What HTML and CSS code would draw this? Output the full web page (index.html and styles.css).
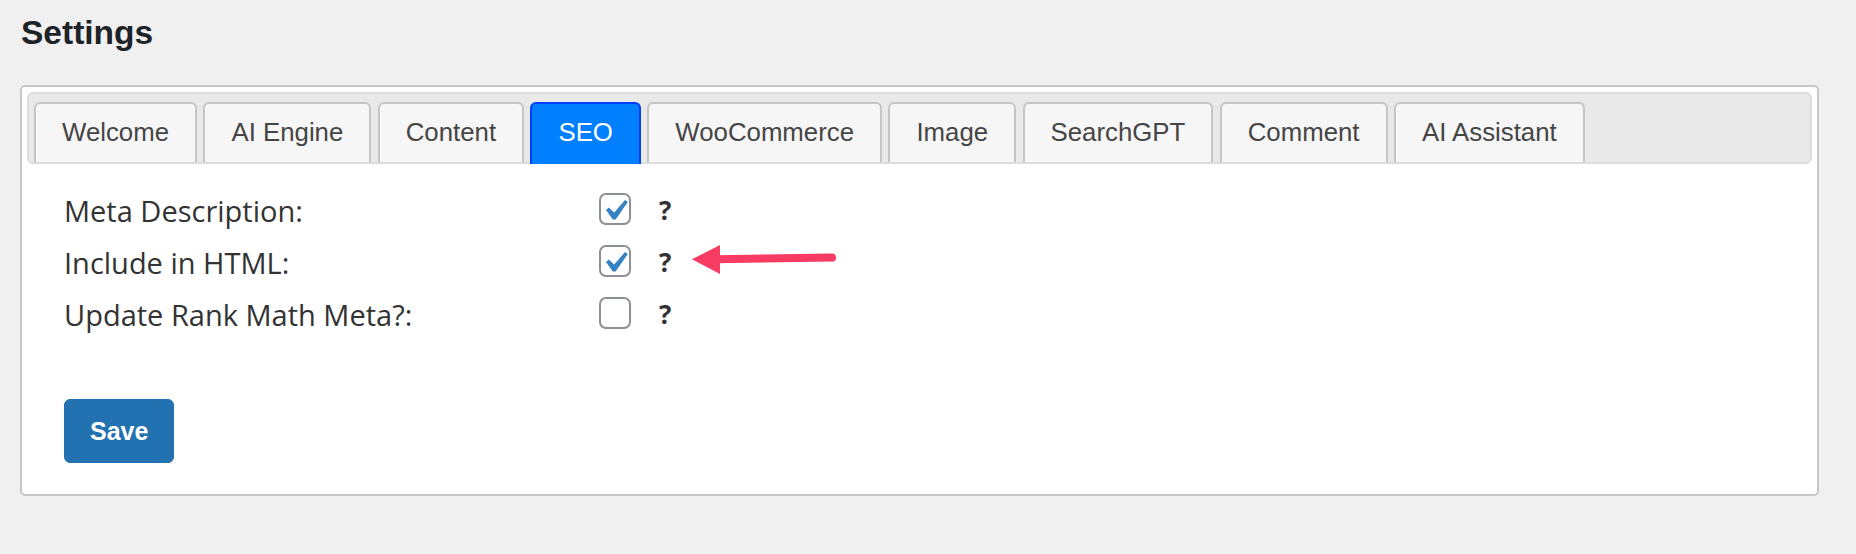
FILE: index.html
```html
<!DOCTYPE html>
<html lang="en">
<head>
<meta charset="utf-8">
<title>Settings</title>
<link rel="stylesheet" href="styles.css">
</head>
<body>
<div class="wrap">
  <h1 class="title">Settings</h1>
  <div class="box">
    <ul class="tabs">
      <li class="tab">Welcome</li>
      <li class="tab">AI Engine</li>
      <li class="tab">Content</li>
      <li class="tab active">SEO</li>
      <li class="tab">WooCommerce</li>
      <li class="tab">Image</li>
      <li class="tab">SearchGPT</li>
      <li class="tab">Comment</li>
      <li class="tab">AI Assistant</li>
    </ul>
    <div class="panel">
      <div class="row">
        <span class="label">Meta Description:</span>
        <span class="check">
          <svg class="tick" width="28" height="28" viewBox="3.4 2.51 13.33 13.33"><path d="M14.83 4.89l1.34.94-5.81 8.38H9.02L5.78 9.67l1.34-1.25 2.57 2.4z"/></svg>
        </span>
        <span class="help">?</span>
      </div>
      <div class="row">
        <span class="label">Include in HTML:</span>
        <span class="check">
          <svg class="tick" width="28" height="28" viewBox="3.4 2.51 13.33 13.33"><path d="M14.83 4.89l1.34.94-5.81 8.38H9.02L5.78 9.67l1.34-1.25 2.57 2.4z"/></svg>
        </span>
        <span class="help">?</span>
        <svg class="arrow" width="150" height="34" viewBox="0 0 150 34">
          <polygon points="2,16.3 30,2 30,31"/>
          <line x1="26" y1="16.2" x2="142" y2="14.6"/>
        </svg>
      </div>
      <div class="row">
        <span class="label">Update Rank Math Meta?:</span>
        <span class="check"></span>
        <span class="help">?</span>
      </div>
      <button class="save" type="button">Save</button>
    </div>
  </div>
</div>
</body>
</html>
```
FILE: styles.css
```css
html, body {
  margin: 0;
  padding: 0;
  background: #f0f0f0;
}

.wrap {
  padding: 13px 37px 0 20px;
}

.title {
  margin: 0 0 32px 1px;
  font-family: "Liberation Sans", Arial, sans-serif;
  font-weight: bold;
  font-size: 33.5px;
  line-height: 40px;
  color: #1d2327;
}

.box {
  background: #fff;
  border: 2px solid #c8c8c8;
  border-radius: 5px;
  padding: 5px;
}

.tabs {
  list-style: none;
  margin: 0;
  padding: 8px 5px 0;
  display: flex;
  align-items: flex-start;
  background: #e9e9e9;
  border: 2px solid #dddddd;
  border-radius: 6px;
}

.tab {
  font-family: "Liberation Sans", Arial, sans-serif;
  font-size: 25.8px;
  line-height: 32px;
  color: #454545;
  background: #f6f6f6;
  border: 2px solid #c5c5c5;
  border-bottom: 0;
  border-radius: 6px 6px 0 0;
  padding: 12px 26px 14px;
  margin-right: 6.4px;
  white-space: nowrap;
}

.tab.active {
  background: #007fff;
  border-color: #003eff;
  color: #fff;
  padding-bottom: 16px;
  margin-bottom: -2px;
}

.panel {
  padding: 18.5px 37px 26px;
}

.row {
  position: relative;
  display: flex;
  align-items: center;
  height: 52px;
}

.label {
  width: 535px;
  flex: none;
  font-family: "Open Sans", "Noto Sans", sans-serif;
  font-size: 29px;
  line-height: 52px;
  padding-top: 4px;
  color: #333333;
}

.check {
  box-sizing: border-box;
  width: 32px;
  height: 32px;
  flex: none;
  border: 2px solid #8c8f94;
  border-radius: 7px;
  background: #fff;
  margin-right: 28px;
}

.tick {
  display: block;
  fill: #3582c4;
}

.help {
  font-family: "Open Sans", "Noto Sans", sans-serif;
  font-weight: bold;
  font-size: 26px;
  line-height: 32px;
  color: #333333;
  padding-top: 3px;
}

.arrow {
  position: absolute;
  left: 626px;
  top: 8.5px;
}

.arrow polygon {
  fill: #f73b63;
}

.arrow line {
  stroke: #f73b63;
  stroke-width: 8;
  stroke-linecap: round;
}

.save {
  display: block;
  margin-top: 60.5px;
  height: 64px;
  padding: 0 25px;
  background: #2271b1;
  border: 1px solid #2271b1;
  border-radius: 6px;
  color: #fff;
  font-family: "Liberation Sans", Arial, sans-serif;
  font-weight: bold;
  font-size: 25px;
  line-height: 62px;
}
```
